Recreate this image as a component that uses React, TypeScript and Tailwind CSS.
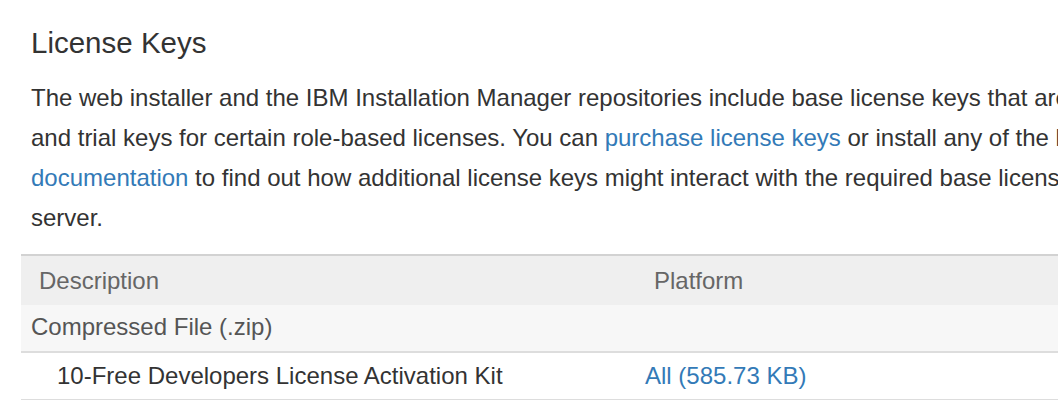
import React from 'react';

const App: React.FC = () => {
  return (
    <div className="w-[1058px] h-[419px] overflow-hidden bg-white text-[#333] font-['Liberation_Sans',Arial,sans-serif]">
      <div className="w-[1400px]">
        <h3 className="mt-[25px] ml-[31px] h-[36px] text-[29.5px] leading-[36px] font-normal">License Keys</h3>
        <p className="mt-[17px] ml-[31px] text-[24px] leading-[40px] whitespace-nowrap">
          The web installer and the IBM Installation Manager repositories include base license keys that are installed by default,
          <br />
          and trial keys for certain role-based licenses. You can{' '}
          <a className="text-[#337ab7]" href="#">purchase license keys</a> or install any of the license keys. See the
          <br />
          <a className="text-[#337ab7]" href="#">documentation</a> to find out how additional license keys might interact with the required base license keys for the
          <br />
          server.
        </p>

        {/* downloads table */}
        <div className="mt-[16px] ml-[21px] text-[24px] border-t-2 border-[#d2d2d2]">
          <div className="grid grid-cols-[615px_1fr] h-[49px] items-center bg-[#efefef] text-[#666]">
            <div className="pl-[18px]">Description</div>
            <div className="pl-[18px]">Platform</div>
          </div>
          <div className="flex h-[48px] items-center bg-[#f7f7f7] text-[#555] pl-[10px] pb-[2px] border-b-2 border-[#ddd]">
            Compressed File (.zip)
          </div>
          <div className="grid grid-cols-[615px_1fr] h-[47px] items-center border-b border-[#ddd]">
            <div className="pl-[36px]">10-Free Developers License Activation Kit</div>
            <div className="pl-[9px]">
              <a className="text-[#337ab7]" href="#">All (585.73 KB)</a>
            </div>
          </div>
        </div>
      </div>
    </div>
  );
};

export default App;
